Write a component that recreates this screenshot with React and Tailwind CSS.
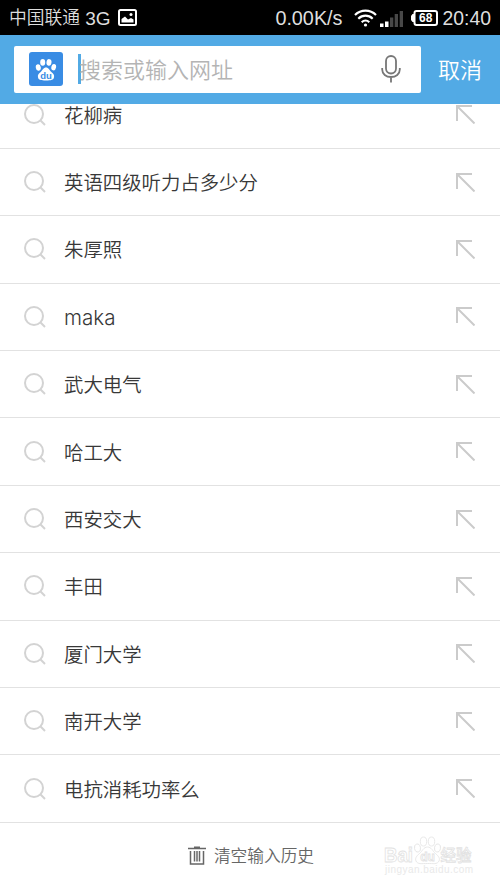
import { useState } from "react";

const HISTORY = [
    "花柳病",
    "英语四级听力占多少分",
    "朱厚照",
    "maka",
    "武大电气",
    "哈工大",
    "西安交大",
    "丰田",
    "厦门大学",
    "南开大学",
    "电抗消耗功率么"
];

function StatusBar() {
    return (
        <div className="flex h-[35px] shrink-0 items-center bg-black pl-[9px] pr-[9px] pt-[2px] font-['Liberation_Sans','Noto_Sans_CJK_SC',sans-serif] leading-none text-[#dedede]">
            <span className="text-[17.8px]">中国联通</span>
            <span className="ml-[5px] text-[19px]">3G</span>
            <svg className="ml-[7px] -mt-[2px]" width="19" height="17" viewBox="0 0 19 17">
                <rect x="1" y="1" width="17" height="15" rx="1.5" fill="none" stroke="#fff" strokeWidth="2" />
                <path d="M3.5 13.5V10L7 7.5l3 3L13 9l2.5 1.5v3z" fill="#fff" />
                <circle cx="13" cy="5.5" r="1.5" fill="#fff" />
            </svg>
            <span className="ml-auto text-[19.8px]">0.00K/s</span>
            <svg className="ml-3 -mt-[2px]" width="23" height="18" viewBox="0 0 23 18" fill="none" stroke="#fff" strokeWidth="2.2">
                <path d="M1 6C7 .2 16 .2 22 6" />
                <path d="M4.3 9.7C8.5 5.7 14.5 5.700 18.7 9.700" />
                <path d="M7.700 13.2c2.200-2 5.400-2 7.600 0" />
                <circle cx="11.500" cy="16" r="1.600" fill="#fff" stroke="none" />
            </svg>
            <svg className="ml-[3px] -mt-[1px]" width="23" height="17" viewBox="0 0 23 17">
                <path d="M0 13.5h3.500V17H0zM5 11.500h3.500V17H5z" fill="#fff" />
                <path d="M10 7.500h3.300V17H10zM14.700 4H18v13h-3.300zM19.700 1H23v16h-3.300z" fill="#484848" />
            </svg>
            <svg className="ml-2 -mt-[1px]" width="27" height="16" viewBox="0 0 27 16">
                <rect x="3.500" y="1" width="22.500" height="14" rx="2" fill="none" stroke="#fff" strokeWidth="2" />
                <path d="M3 4H1.500L0 6v4l1.500 2H3z" fill="#fff" />
                <text x="14.700" y="12.200" textAnchor="middle" fill="#fff" fontSize="12" fontWeight="700" fontFamily="Liberation Sans">68</text>
            </svg>
            <span className="ml-1 text-[19.400px]">20:40</span>
        </div>
    );
}

function BaiduLogo() {
    return (
        <svg width="34" height="34" viewBox="0 0 34 34">
            <rect width="34" height="34" rx="3" fill="#398ce4" />
            <g fill="#fff">
                <ellipse cx="9.300" cy="15.500" rx="2.500" ry="3.200" transform="rotate(-10 9.300 15.500)" />
                <ellipse cx="13.700" cy="10.400" rx="2.500" ry="3.300" />
                <ellipse cx="20" cy="10.400" rx="2.500" ry="3.300" transform="rotate(8 20 10.400)" />
                <ellipse cx="24.700" cy="15.200" rx="2.400" ry="3.200" transform="rotate(10 24.700 15.200)" />
                <path d="M17 15.500c2.600 0 3.400 2.700 5.300 4.400 2.300 2 3.200 3 2.700 5.300-.5 2.700-2.700 3.200-8 3.200s-7.500-.5-8-3.200c-.5-2.300.4-3.300 2.700-5.300 1.900-1.700 2.700-4.400 5.300-4.400z" />
            </g>
            <text x="17" y="26.500" textAnchor="middle" fill="#398ce4" fontSize="9.500" fontWeight="700" fontFamily="Liberation Sans">du</text>
        </svg>
    );
}

function SearchBar({ value, onChange }) {
    return (
        <div className="flex h-[68.5px] shrink-0 items-center bg-[#52aae5] pl-[14px] pr-[18px]">
            <div className="flex h-[47px] w-[407px] items-center rounded-[2px] bg-white pl-[15px] pr-5">
                <BaiduLogo />
                <span className="ml-[15px] h-[30px] w-[3px] shrink-0 bg-[#52aae5]" />
                <input
                    type="text"
                    value={value}
                    onChange={e => onChange(e.target.value)}
                    placeholder="搜索或输入网址"
                    className="-ml-[2px] min-w-0 flex-1 pt-[2px] text-[22px] text-[#333] outline-none placeholder:text-[#b4b4b4]"
                />
                <svg width="20" height="28" viewBox="0 0 20 28" fill="none" stroke="#777" strokeWidth="1.8">
                    <rect x="5" y="1" width="10" height="17.5" rx="5" />
                    <path d="M1.2 13v1.5c0 4.5 3.8 7.5 8.8 7.500s8.800-3 8.800-7.500V13M10 22v5.500" />
                </svg>
            </div>
            <button className="ml-auto pt-[2px] text-[22px] leading-none text-white">取消</button>
        </div>
    );
}

function HistoryRow({ text }) {
    return (
        <li className="flex h-[67.4px] items-center border-b border-[#e2e2e2] pl-6 pr-[25px]">
            <svg width="22" height="22" viewBox="0 0 22 22" fill="none" stroke="#d3d3d3" strokeWidth="2">
                <circle cx="10" cy="10" r="9" />
                <path d="M16.300 16.300l4.700 4.700" />
            </svg>
            {/* latin entries are set a little larger than the chinese ones */}
            <span className={`ml-[18px] pt-[3px] text-[#383838] ${/^[a-z]+$/i.test(text) ? "text-[20.600px]" : "text-[19.400px]"}`}>{text}</span>
            <svg className="ml-auto" width="19" height="19" viewBox="0 0 19 19" fill="none" stroke="#cbcbcb" strokeWidth="2">
                <path d="M16 1H1v15M1 1l17.500 17.500" />
            </svg>
        </li>
    );
}

function Watermark() {
    return (
        <svg className="absolute bottom-[9px] right-[22px]" width="94" height="46" viewBox="0 0 94 46" fill="#fff" stroke="#e2e2e2" strokeWidth="0.8">
            <text x="0" y="27.500" fontSize="20" textLength="29" lengthAdjust="spacingAndGlyphs" fontWeight="700" fontFamily="Liberation Sans">Bai</text>
            <ellipse cx="33.500" cy="14" rx="3" ry="4" transform="rotate(-12 33.500 14)" />
            <ellipse cx="39.500" cy="7.500" rx="3.200" ry="4.500" />
            <ellipse cx="47.500" cy="7.500" rx="3.200" ry="4.500" />
            <ellipse cx="53.500" cy="14" rx="3" ry="4" transform="rotate(12 53.500 14)" />
            <path d="M43.500 13c4 0 5 4 8 6.500 3.500 3 4.500 5 3.500 7.500-1.500 3.500-6 2.500-11.500 2.500s-10 1-11.500-2.500c-1-2.500 0-4.500 3.500-7.500 3-2.500 4-6.500 8-6.500z" />
            <text x="43.500" y="26.500" textAnchor="middle" fontSize="12" fontWeight="700" fontFamily="Liberation Sans">du</text>
            <text x="56.500" y="26.500" fontSize="15.500" fontWeight="500" fontFamily="Noto Sans CJK SC">经验</text>
            <text x="1" y="39" fontSize="10" textLength="88" fill="#e9e9e9" stroke="none" fontFamily="Liberation Sans">jingyan.baidu.com</text>
        </svg>
    );
}

export default function App() {
    const [query, setQuery] = useState("");
    const [history, setHistory] = useState(HISTORY);

    return (
        <div className="relative flex h-[889px] w-[500px] flex-col overflow-hidden bg-white font-['Inter','Noto_Sans_CJK_SC',sans-serif] font-[350]">
            <StatusBar />
            <SearchBar value={query} onChange={setQuery} />
            <div className="shrink-0 overflow-hidden">
                <ul className="-mt-[22px]">
                    {history.map(item => <HistoryRow key={item} text={item} />)}
                </ul>
            </div>
            <button onClick={() => setHistory([])} className="flex flex-1 items-center justify-center pl-[2px] text-[16.7px] text-[#666]">
                <svg className="mr-2" width="18" height="19" viewBox="0 0 18 19" fill="none" stroke="#666" strokeWidth="1.5">
                    <path d="M0 2.500h18M6 1.200h6M2.500 5v13h13V5M6.500 5v10.500M9 5v10.500M11.500 5v10.500" />
                </svg>
                <span className="pt-[2px]">清空输入历史</span>
            </button>
            <Watermark />
        </div>
    );
}
